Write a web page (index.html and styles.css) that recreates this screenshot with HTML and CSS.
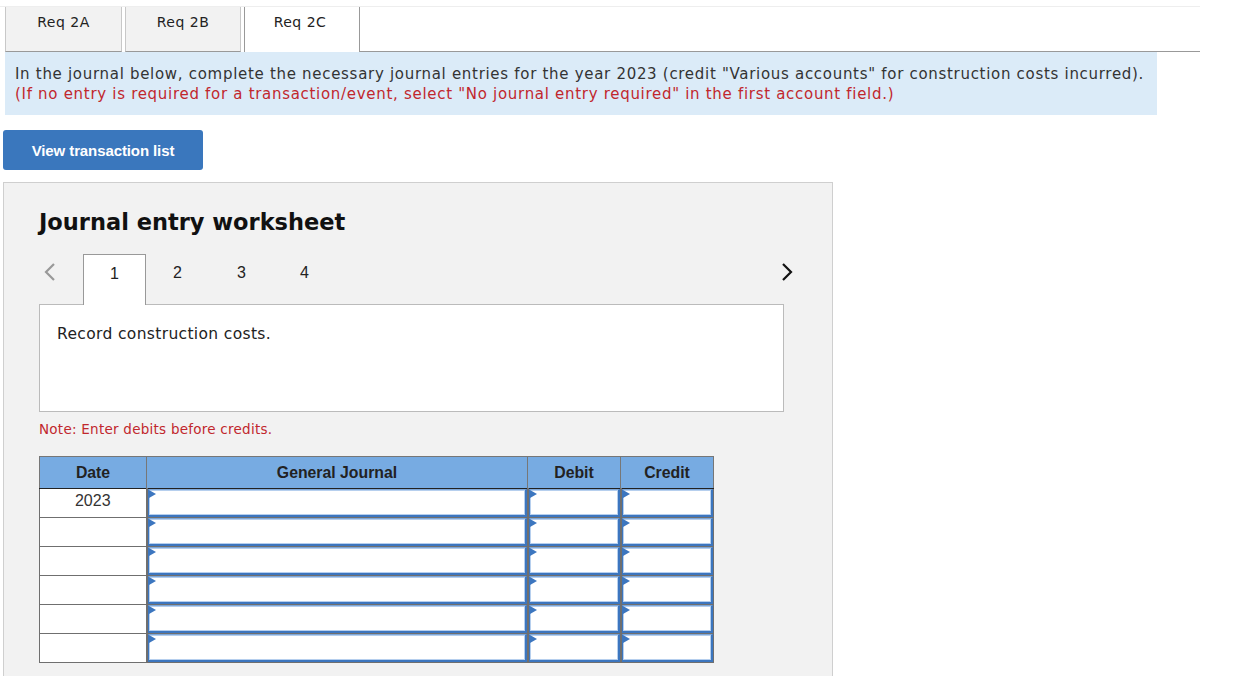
FILE: index.html
```html
<!DOCTYPE html>
<html>
<head>
<meta charset="utf-8">
<link rel="stylesheet" href="styles.css">
</head>
<body>
<div class="page">
  <div class="tabs">
    <div class="tab">Req 2A</div>
    <div class="tab">Req 2B</div>
    <div class="tab active">Req 2C</div>
    <div class="tab-fill"></div>
  </div>
  <div class="info">
    <div>In the journal below, complete the necessary journal entries for the year 2023 (credit "Various accounts" for construction costs incurred).</div>
    <div class="red">(If no entry is required for a transaction/event, select "No journal entry required" in the first account field.)</div>
  </div>
  <button class="btn">View transaction list</button>
  <div class="panel">
    <h2 class="title">Journal entry worksheet</h2>
    <div class="steps">
      <span class="arrow left"><svg width="12" height="20" viewBox="0 0 12 20"><path d="M10 2 L2 10 L10 18" fill="none" stroke="#999" stroke-width="2.2"/></svg></span>
      <div class="step active">1</div>
      <div class="step">2</div>
      <div class="step">3</div>
      <div class="step">4</div>
      <span class="spacer"></span>
      <span class="arrow right"><svg width="12" height="20" viewBox="0 0 12 20"><path d="M2 2 L10 10 L2 18" fill="none" stroke="#111" stroke-width="2.2"/></svg></span>
    </div>
    <div class="desc">Record construction costs.</div>
    <div class="note">Note: Enter debits before credits.</div>
    <table class="journal">
      <colgroup><col class="c-date"><col class="c-gj"><col class="c-dr"><col class="c-cr"></colgroup>
      <thead><tr><th>Date</th><th>General Journal</th><th>Debit</th><th>Credit</th></tr></thead>
      <tbody>
        <tr><td class="date">2023</td><td class="in"><div class="box"></div></td><td class="in"><div class="box"></div></td><td class="in"><div class="box"></div></td></tr>
        <tr><td class="date"></td><td class="in"><div class="box"></div></td><td class="in"><div class="box"></div></td><td class="in"><div class="box"></div></td></tr>
        <tr><td class="date"></td><td class="in"><div class="box"></div></td><td class="in"><div class="box"></div></td><td class="in"><div class="box"></div></td></tr>
        <tr><td class="date"></td><td class="in"><div class="box"></div></td><td class="in"><div class="box"></div></td><td class="in"><div class="box"></div></td></tr>
        <tr><td class="date"></td><td class="in"><div class="box"></div></td><td class="in"><div class="box"></div></td><td class="in"><div class="box"></div></td></tr>
        <tr><td class="date"></td><td class="in"><div class="box"></div></td><td class="in"><div class="box"></div></td><td class="in"><div class="box"></div></td></tr>
      </tbody>
    </table>
  </div>
</div>
</body>
</html>
```

FILE: styles.css
```css
* { box-sizing: border-box; }
html, body { margin: 0; padding: 0; background: #fff; }
body { font-family: "DejaVu Sans", Verdana, sans-serif; color: #222; overflow: hidden; }
.page { padding: 6px 0 0 0; width: 1235px; }

.tabs { display: flex; width: 1200px; border-top: 1px solid #eee; height: 46px; }
.tab {
  width: 116px; margin-left: 3px; height: 45px;
  background: #f2f2f2; border: 1px solid #c8c8c8; border-top: none; border-bottom: 1px solid #999;
  font-size: 14px; letter-spacing: 0.5px; text-align: center; padding-top: 7px; color: #222;
}
.tab:first-child { margin-left: 5px; width: 117px; }
.tab.active { background: #fff; border: 1px solid #999; border-top: none; border-bottom: none; padding-right: 4px; }
.tab-fill { flex: 1; border-bottom: 1px solid #999; }

.info {
  margin-left: 5px; width: 1152px; height: 63px; background: #dbebf8;
  font-size: 15px; letter-spacing: 0.7px; line-height: 19.5px; padding: 13px 10px 0 10px; color: #333; white-space: nowrap;
}
.info .red { color: #c1272d; }

.btn {
  display: block; margin: 15px 0 0 3px; width: 200px; height: 40px;
  background: #3a77bd; border: none; border-radius: 3px; color: #fff;
  font-family: "Liberation Sans", Arial, sans-serif; font-weight: bold; font-size: 15px; letter-spacing: -0.1px;
  padding: 0;
}

.panel {
  margin: 12px 0 0 3px; width: 830px; height: 500px; background: #f2f2f2;
  border: 1px solid #cfcfcf; padding: 0 48px 0 35px;
}
.title { margin: 24px 0 0 0; font-size: 22.5px; font-weight: bold; color: #111; line-height: 30px; height: 30px; }

.steps { display: flex; align-items: stretch; margin-top: 17px; height: 50px; font-family: "Liberation Sans", Arial, sans-serif; font-size: 16px; }
.arrow { display: flex; align-items: center; padding-bottom: 14px; }
.arrow.left { width: 44px; padding-left: 5px; }
.arrow.right { padding-right: 0; margin-right: -9px; }
.step { width: 63px; text-align: center; padding-top: 10px; color: #222; }
.step.active { background: #fff; border: 1px solid #999; border-bottom: none; position: relative; z-index: 1; height: 51px; width: 63px; }
.step:nth-child(4), .step:nth-child(5) { padding-left: 2px; }
.spacer { flex: 1; }

.desc {
  background: #fff; border: 1px solid #bbb; height: 108px; width: 745px;
  font-size: 15.5px; letter-spacing: 0.35px; padding: 20px 0 0 17px; color: #222;
}
.note { color: #c1272d; font-size: 13.5px; letter-spacing: 0.25px; margin-top: 9px; height: 18px; }

.journal { border-collapse: collapse; margin-top: 17px; font-family: "Liberation Sans", Arial, sans-serif; }
.c-date { width: 107px; }
.c-gj { width: 381px; }
.c-dr { width: 93px; }
.c-cr { width: 93px; }
.journal th {
  background: #77abe2; border: 1px solid #222; border-top-color: #777; border-left-color: #777; border-right-color: #777;
  height: 32px; font-size: 15.8px; font-weight: bold; color: #222; padding: 0;
}
.journal th + th { border-left-color: #222; }
.journal td { border: 1px solid #6f6f6f; height: 29px; padding: 0; background: #fff; }
.journal td.date { text-align: center; font-size: 16px; color: #333; vertical-align: top; padding-top: 3px; }
.journal td.in { border-width: 1px 1px 1px 2px; }
.box {
  position: relative; height: 28px; border: 2px solid #3c76bf; border-top: 1px solid #7ea7d8; border-left: 1px solid #3c76bf;
  box-shadow: inset 1px 1px 0 #b6cfee, inset -1px -1px 0 #b6cfee; background: #fff;
}
.box::before {
  content: ""; position: absolute; left: 0; top: 0;
  border-left: 7px solid #3c76bf; border-top: 4px solid transparent; border-bottom: 4px solid transparent;
}
```
